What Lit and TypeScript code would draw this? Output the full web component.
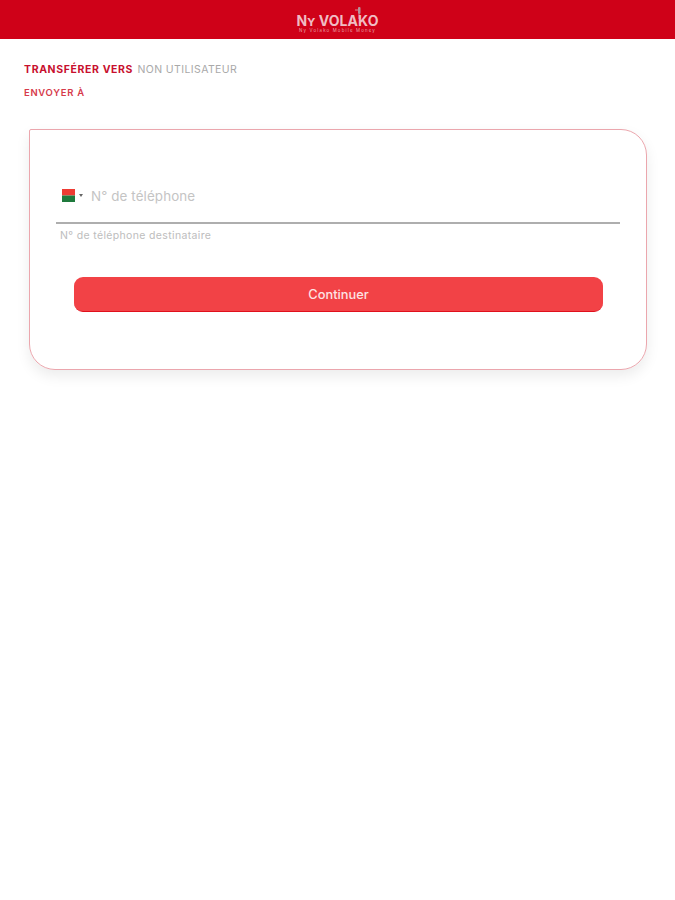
import { LitElement, html, css } from "lit";
import { customElement } from "lit/decorators.js";

@customElement("app-root")
export class AppRoot extends LitElement {
  static styles = css`
    :host {
      display: block;
      width: 675px;
      height: 900px;
      background: #fff;
      font-family: Inter, "Liberation Sans", sans-serif;
      overflow: hidden;
    }
    .bar {
      height: 39px;
      background: #cf0118;
      display: flex;
      justify-content: center;
      align-items: center;
    }
    .logo {
      position: relative;
      width: 84px;
      height: 39px;
      color: #f0bcc3;
      text-align: center;
    }
    .logo-name {
      position: absolute;
      left: 0;
      right: 0;
      top: 14px;
      font-size: 14px;
      line-height: 14px;
      font-weight: 700;
      white-space: nowrap;
      letter-spacing: 0.1px;
    }
    .logo-sub {
      position: absolute;
      left: 0;
      right: 0;
      top: 28.5px;
      font-size: 4.4px;
      line-height: 4px;
      white-space: nowrap;
      color: #e8a0a9;
      letter-spacing: 1.15px;
    }
    .logo svg {
      position: absolute;
      left: 59px;
      top: 7px;
    }
    .content {
      padding: 24px 28px 0 24px;
    }
    .crumbs {
      font-size: 10.5px;
      line-height: 13px;
      color: #a9a9a9;
      letter-spacing: 0.4px;
      margin-bottom: 10px;
    }
    .crumbs b {
      color: #c8102e;
      font-weight: 700;
      letter-spacing: 0.62px;
      margin-right: 1px;
    }
    .send {
      font-size: 9.5px;
      line-height: 13px;
      color: #d63a4a;
      font-weight: 600;
      letter-spacing: 0.7px;
    }
    .card {
      box-sizing: border-box;
      margin: 30px 0 0 5px;
      width: 618px;
      height: 241px;
      border: 1px solid #eba6ad;
      border-radius: 2px 26px 26px 26px;
      box-shadow: 0 6px 14px rgba(0, 0, 0, 0.08);
      padding: 52px 26px 0 26px;
    }
    .phone {
      display: flex;
      align-items: center;
      height: 42px;
      padding: 0 0 13px 6px;
      border-bottom: 2px solid #aeaeae;
      box-sizing: border-box;
      width: 564px;
    }
    .flag {
      width: 13px;
      height: 13px;
      display: block;
    }
    .caret {
      width: 0;
      height: 0;
      border-left: 2.5px solid transparent;
      border-right: 2.5px solid transparent;
      border-top: 3px solid #666;
      margin: 0 8px 0 4px;
    }
    .placeholder {
      font-size: 13.4px;
      color: #c4c4c4;
      letter-spacing: 0.1px;
    }
    .hint {
      font-size: 10.5px;
      line-height: 13px;
      color: #bdbdbd;
      padding: 5px 0 0 4px;
      letter-spacing: 0.35px;
    }
    .btn {
      margin: 35px 0 0 18px;
      width: 529px;
      height: 35px;
      box-sizing: border-box;
      background: #f24246;
      border: none;
      border-bottom: 1px solid #e0101c;
      border-radius: 9px;
      color: #fde3e3;
      font: 500 12.8px/16px Inter, "Liberation Sans", sans-serif;
      text-align: center;
      padding: 2px 0 0;
      display: block;
    }
  `;

  render() {
    return html`
      <div class="bar">
        <div class="logo">
          <svg width="8" height="12" viewBox="0 0 8 12">
            <rect x="3" y="0" width="2.5" height="7" rx="1" fill="#b5929a"></rect>
            <path d="M0 3 H3 M4 7 V12" stroke="#d98a94" stroke-width="1" fill="none"></path>
          </svg>
          <div class="logo-name">Nʏ VOLAKO</div>
          <div class="logo-sub">Ny Volako Mobile Money</div>
        </div>
      </div>
      <div class="content">
        <div class="crumbs"><b>TRANSFÉRER VERS</b> NON UTILISATEUR</div>
        <div class="send">ENVOYER À</div>
        <div class="card">
          <div class="phone">
            <svg class="flag" viewBox="0 0 13 13">
              <rect width="13" height="6.5" fill="#ee3b33"></rect>
              <rect y="6.5" width="13" height="6.5" fill="#1f7a3d"></rect>
            </svg>
            <span class="caret"></span>
            <span class="placeholder">N° de téléphone</span>
          </div>
          <div class="hint">N° de téléphone destinataire</div>
          <button class="btn">Continuer</button>
        </div>
      </div>
    `;
  }
}
